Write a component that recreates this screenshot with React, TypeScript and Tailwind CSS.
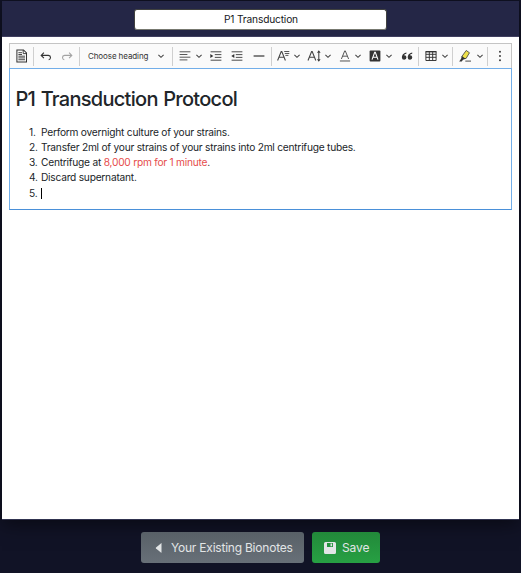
import React from "react";

function Chevron() {
  return (
    <svg className="w-[6px] h-[6px] shrink-0" viewBox="0 0 6 6" fill="none" stroke="#444" strokeWidth="1.1">
      <path d="M.4 1.9 3 4.3 5.6 1.9" />
    </svg>
  );
}

function Sep() {
  return <span className="w-px h-[19px] shrink-0 bg-[#cfcfcf]" />;
}

function Icon({ children, cell }: { children: React.ReactNode; cell: string }) {
  return (
    <span className={"flex shrink-0 items-center justify-center " + cell}>
      <svg className="h-3 w-3 shrink-0 overflow-visible" viewBox="0 0 20 20" fill="#333">
        {children}
      </svg>
    </span>
  );
}

function Toolbar() {
  return (
    <div className="flex h-[25px] items-center border border-b-0 border-[#c4c4c4] bg-[#fafafa]">
      <Icon cell="w-[23px]">
        <path d="M1.500 0h11l5 5v15h-16z" fill="#fafafa" stroke="#333" strokeWidth="1.7" />
        <path d="M12 0v6h5.500M4 4.500h6M4 7.500h6M4 10.300h11M4 13.200h11M4 16.200h11" fill="none" stroke="#333" strokeWidth="1.5" />
      </Icon>
      <Sep />
      <Icon cell="ml-px w-[22px]">
        <path d="M6.500 4.500 2 9l4.500 4.500M2.500 9H14a4 3.600 0 0 1 3.500 3.600q0 3-3 3.800" fill="none" stroke="#333" strokeWidth="1.8" />
      </Icon>
      <Icon cell="w-5 mr-[2px]">
        <path d="M13.500 4.500 18 9l-4.500 4.500M17.500 9H6a4 3.600 0 0 0-3.500 3.600q0 3 3 3.800" fill="none" stroke="#a3a3a3" strokeWidth="1.8" />
      </Icon>
      <Sep />
      <span className="flex w-[92px] shrink-0 items-center justify-between pl-2 pr-2 text-[8px] leading-[12px] tracking-[-0.1px] text-[#333]">
        <span className="whitespace-nowrap">Choose heading</span>
        <Chevron />
      </span>
      <Sep />
      <Icon cell="w-[23px]">
        <path d="M1 3h18M1 7.500h13M1 12h18M1 16.500h13" stroke="#444" strokeWidth="1.5" />
      </Icon>
      <Chevron />
      <Icon cell="ml-[3px] w-[21px]">
        <path d="M1 3h18M8 7.700h11M8 12.300h11M1 17h18" stroke="#444" strokeWidth="1.6" />
        <path d="m.5 6.500 5 3.500-5 3.500z" />
      </Icon>
      <Icon cell="w-[21px]">
        <path d="M1 3h18M8 7.700h11M8 12.300h11M1 17h18" stroke="#444" strokeWidth="1.6" />
        <path d="m5.500 6.500-5 3.500 5 3.500z" />
      </Icon>
      <Icon cell="w-[23px] mr-px">
        <path d="M1 10h18" stroke="#333" strokeWidth="2" />
      </Icon>
      <Sep />
      <Icon cell="w-[22px]">
        <path d="M1 17.500 7 2.500h1L14 17.500M3 12h9" fill="none" stroke="#444" strokeWidth="1.8" />
        <path d="M12 2.500h8.500M13 5.800h7.500M14 9h5" stroke="#444" strokeWidth="1.5" />
      </Icon>
      <Chevron />
      <Icon cell="ml-[3px] w-[22px]">
        <path d="M0 17.500 6 2.500h1L13 17.500M2 12h9M18 4v12" fill="none" stroke="#444" strokeWidth="1.8" />
        <path d="m18 .5 3 4h-6zM18 19.500l3-4h-6z" />
      </Icon>
      <Chevron />
      <Icon cell="ml-[3px] w-[21px]">
        <path d="M4 15 9.500 1.500h1L16 15M6.200 10.300h7.600" fill="none" stroke="#444" strokeWidth="1.5" />
        <path d="M1.500 18.300h17" stroke="#555" strokeWidth="1.7" />
      </Icon>
      <Chevron />
      <Icon cell="ml-[3px] w-[22px]">
        <rect x="1" y="1" width="18" height="18" rx="1.5" />
        <path d="M5 16 9.500 4h1L15 16M7 12h6" fill="none" stroke="#fff" strokeWidth="1.8" />
      </Icon>
      <Chevron />
      <Icon cell="ml-[4px] w-[21px] mr-px">
        <path d="M9 4C5.500 4.500 1.500 7 1.500 12.500a3.800 3.800 0 1 0 3.500-3.800C5.600 7.500 7 6.700 9 6.400zM18.700 4c-3.500.500-7.500 3-7.500 8.500a3.800 3.800 0 1 0 3.500-3.800c.6-1.200 2-2 4-2.300z" />
      </Icon>
      <Sep />
      <Icon cell="ml-px w-[22px]">
        <path d="M1.500 2.500h17v15h-17zM1.500 7.200h17M1.500 12.200h17M7.200 2.500v15M12.800 2.500v15" fill="none" stroke="#333" strokeWidth="1.6" />
        <path d="M1 2h18v2H1z" />
      </Icon>
      <Chevron />
      <span className="w-1 shrink-0" />
      <Sep />
      <Icon cell="w-6">
        <path d="M5 10.500 12 .8l5.400 3.800-5.500 9.400-4.900.9z" fill="#eee14a" stroke="#444" strokeWidth="1.4" />
        <path d="m4.600 10 6.400 4.600-4 1.400L4.500 19H.3l3.200-4.500z" />
        <path d="M10.500 18.500H20" stroke="#444" strokeWidth="1.6" />
      </Icon>
      <Chevron />
      <span className="w-1 shrink-0" />
      <Sep />
      <Icon cell="w-6">
        <circle cx="10" cy="3" r="1.6" />
        <circle cx="10" cy="10" r="1.6" />
        <circle cx="10" cy="17" r="1.6" />
      </Icon>
    </div>
  );
}

const row = "flex h-[15.25px] items-center whitespace-nowrap";
const num = "w-[12px] shrink-0";

export default function App() {
  return (
    <div className="h-[573px] w-[521px] overflow-hidden bg-[#111326] px-[2px] pt-px font-['Inter','Liberation_Sans',sans-serif]">
      <main className="h-[519px] border-b border-[#30334f] bg-white shadow-[0_4px_18px_rgba(0,0,0,0.5)]">
        <header className="flex h-[36px] items-start justify-center border-b border-[#403f60] bg-[#242646] pt-[8px]">
          <div className="flex h-[21px] w-[253px] items-center justify-center rounded-[3px] border border-[#40413f] border-b-[#777970] bg-white pl-px text-[10.2px] tracking-[-0.17px] text-[#16181b]">
            P1 Transduction
          </div>
        </header>
        <section className="ml-[7px] mt-[6px] w-[503px]">
          <Toolbar />
          <div className="h-[142px] border border-[#72aee9] border-b-[#4a90d9] pl-[5px] pt-[18px] text-[#212529]">
            <h1 className="ml-[0.5px] h-[25px] whitespace-nowrap text-[20px] font-medium leading-[25px] tracking-[-0.71px] [word-spacing:0.8px]">
              P1 Transduction Protocol
            </h1>
            <ol className="ml-[14px] mt-[12.6px] text-[10.2px] leading-[15px] tracking-[-0.235px]">
              <li className={row}><span className={num}>1.</span>Perform overnight culture of your strains.</li>
              <li className={row}><span className={num}>2.</span>Transfer 2ml of your strains of your strains into 2ml centrifuge tubes.</li>
              <li className={row}><span className={num}>3.</span><span>Centrifuge at <span className="text-[#e64c4c]">8,000 rpm for 1 minute</span>.</span></li>
              <li className={row}><span className={num}>4.</span>Discard supernatant.</li>
              <li className={row}><span className={num}>5.</span><span className="h-[11px] w-px bg-black" /></li>
            </ol>
          </div>
        </section>
      </main>
      <footer className="flex gap-[8px] pl-[139px] pt-[12px] text-[12px] text-[#e2e5e6]">
        <button className="flex h-[31px] w-[163px] items-center rounded-[3px] bg-linear-to-b from-[#586067] to-[#687078] pl-[14px]">
          <svg className="mr-[9px] h-[10px] w-[7px]" viewBox="0 0 7 10" fill="currentColor">
            <path d="M6.5.6v8.8q0 .6-.6.2L1 5.5Q.5 5 1 4.5L5.9.4q.6-.4.6.2" />
          </svg>
          <span className="whitespace-nowrap tracking-[-0.22px]">Your Existing Bionotes</span>
        </button>
        <button className="flex h-[31px] w-[68px] items-center rounded-[3px] bg-linear-to-b from-[#22893a] to-[#27a043] pl-[12px]">
          <svg className="mr-[6px] h-3 w-3" viewBox="0 0 12 12" fill="currentColor" fillRule="evenodd">
            <path d="M1.5 0h9A1.5 1.5 0 0 1 12 1.5v9a1.5 1.5 0 0 1-1.5 1.5h-9A1.5 1.5 0 0 1 0 10.500v-9A1.500 1.500 0 0 1 1.500 0M3 1v4h6V1zm3.500.6h1.600v2.600H6.500z" />
          </svg>
          <span className="tracking-[-0.1px]">Save</span>
        </button>
      </footer>
    </div>
  );
}
